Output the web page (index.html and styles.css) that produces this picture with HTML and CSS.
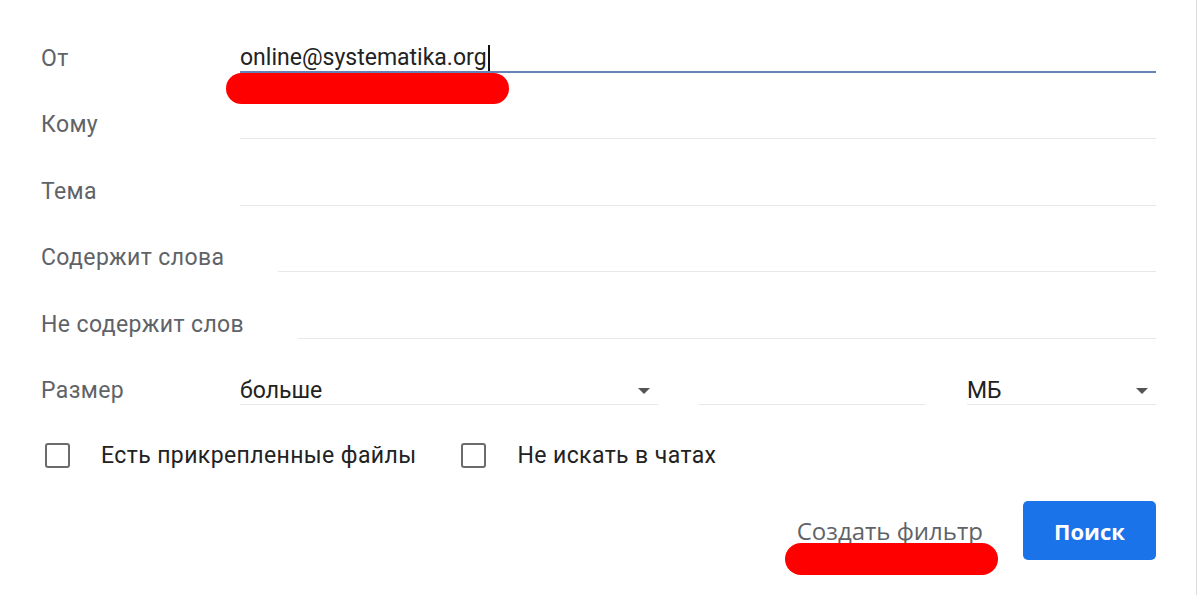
FILE: index.html
```html
<!DOCTYPE html>
<html lang="ru">
<head>
<meta charset="utf-8">
<link rel="stylesheet" href="styles.css">
</head>
<body>
<div class="page">
  <form class="filter">
    <div class="row">
      <label class="label">От</label>
      <div class="field focused"><span class="value">online@systematika.org</span><span class="caret"></span></div>
    </div>
    <div class="row">
      <label class="label">Кому</label>
      <div class="field"></div>
    </div>
    <div class="row">
      <label class="label">Тема</label>
      <div class="field"></div>
    </div>
    <div class="row">
      <label class="label">Содержит слова</label>
      <div class="field"></div>
    </div>
    <div class="row">
      <label class="label">Не содержит слов</label>
      <div class="field"></div>
    </div>
    <div class="row">
      <label class="label">Размер</label>
      <div class="size-group">
        <div class="field select cmp"><span class="value">больше</span><span class="arrow"></span></div>
        <div class="field num"></div>
        <div class="field select unit"><span class="value">МБ</span><span class="arrow"></span></div>
      </div>
    </div>
    <div class="checks">
      <div class="check"><span class="box"></span><span class="check-label">Есть прикрепленные файлы</span></div>
      <div class="check"><span class="box"></span><span class="check-label">Не искать в чатах</span></div>
    </div>
    <div class="actions">
      <span class="link-btn">Создать фильтр</span>
      <span class="primary-btn">Поиск</span>
    </div>
  </form>
  <span class="mark mark-1"></span>
  <span class="mark mark-2"></span>
</div>
</body>
</html>
```

FILE: styles.css
```css
html, body {
  margin: 0;
  padding: 0;
  background: #fff;
}
.page {
  position: relative;
  width: 1196px;
  height: 595px;
  border-right: 1px solid #dcdcdc;
  font-family: Roboto, "Noto Sans", sans-serif;
  overflow: hidden;
}
.filter {
  width: 1115px;
  padding: 6px 0 0 41px;
  display: flex;
  flex-direction: column;
}
.row {
  height: 66.5px;
  display: flex;
  align-items: flex-end;
}
.label {
  min-width: 145px;
  margin-right: 54px;
  font-size: 23px;
  letter-spacing: 0.4px;
  line-height: 26px;
  padding-bottom: 1px;
  color: #5f6368;
  white-space: nowrap;
}
.field {
  flex: 1;
  height: 26px;
  border-bottom: 1px solid #e8e8e8;
  display: flex;
  align-items: center;
  font-size: 23px;
  line-height: 26px;
  color: #222;
  position: relative;
}
.field.focused {
  border-bottom: 2px solid #6683b8;
  height: 25px;
  align-items: flex-end;
}
.caret {
  display: inline-block;
  width: 2px;
  height: 26px;
  background: #111;
  margin-left: 1px;
  margin-bottom: 0;
}
.size-group {
  flex: 1;
  display: flex;
}
.select {
  justify-content: space-between;
}
.cmp {
  flex: 0 0 418px;
}
.num {
  flex: 0 0 228px;
  margin-left: 40px;
}
.unit {
  flex: 0 0 189px;
  margin-left: 41px;
}
.arrow {
  width: 0;
  height: 0;
  border-left: 6px solid transparent;
  border-right: 6px solid transparent;
  border-top: 6px solid #555;
  margin-right: 8px;
}
.checks {
  display: flex;
  align-items: center;
  height: 33px;
  margin-top: 34px;
  padding-left: 4px;
}
.check {
  display: flex;
  align-items: center;
  margin-right: 45px;
}
.box {
  width: 21px;
  height: 21px;
  border: 2.5px solid #6b6b6b;
  border-radius: 3px;
  margin-right: 31px;
}
.check-label {
  font-size: 23px;
  letter-spacing: 0.4px;
  color: #222;
}
.actions {
  display: flex;
  justify-content: flex-end;
  align-items: center;
  margin-top: 29px;
}
.link-btn {
  font-family: "Open Sans", Roboto, sans-serif;
  font-size: 24px;
  color: #5f6368;
  margin-right: 40px;
}
.primary-btn {
  width: 133px;
  height: 59px;
  display: flex;
  align-items: center;
  justify-content: center;
  background: #1a73e8;
  color: #fff;
  border-radius: 5px;
  font-family: "Open Sans", Roboto, sans-serif;
  font-weight: 700;
  font-size: 22px;
}
.mark {
  position: absolute;
  background: #ff0000;
  border-radius: 16px;
}
.mark-1 {
  left: 226px;
  top: 73px;
  width: 283px;
  height: 31px;
}
.mark-2 {
  left: 785px;
  top: 543px;
  width: 213px;
  height: 32px;
}
```
